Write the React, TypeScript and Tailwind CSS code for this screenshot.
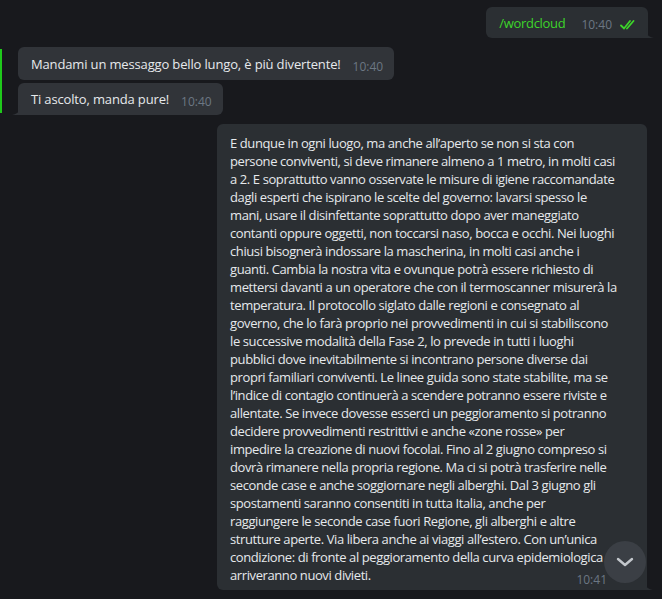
import React from 'react';

const LINES = [
  'E dunque in ogni luogo, ma anche all’aperto se non si sta con',
  'persone conviventi, si deve rimanere almeno a 1 metro, in molti casi',
  'a 2. E soprattutto vanno osservate le misure di igiene raccomandate',
  'dagli esperti che ispirano le scelte del governo: lavarsi spesso le',
  'mani, usare il disinfettante soprattutto dopo aver maneggiato',
  'contanti oppure oggetti, non toccarsi naso, bocca e occhi. Nei luoghi',
  'chiusi bisognerà indossare la mascherina, in molti casi anche i',
  'guanti. Cambia la nostra vita e ovunque potrà essere richiesto di',
  'mettersi davanti a un operatore che con il termoscanner misurerà la',
  'temperatura. Il protocollo siglato dalle regioni e consegnato al',
  'governo, che lo farà proprio nei provvedimenti in cui si stabiliscono',
  'le successive modalità della Fase 2, lo prevede in tutti i luoghi',
  'pubblici dove inevitabilmente si incontrano persone diverse dai',
  'propri familiari conviventi. Le linee guida sono state stabilite, ma se',
  'l’indice di contagio continuerà a scendere potranno essere riviste e',
  'allentate. Se invece dovesse esserci un peggioramento si potranno',
  'decidere provvedimenti restrittivi e anche «zone rosse» per',
  'impedire la creazione di nuovi focolai. Fino al 2 giugno compreso si',
  'dovrà rimanere nella propria regione. Ma ci si potrà trasferire nelle',
  'seconde case e anche soggiornare negli alberghi. Dal 3 giugno gli',
  'spostamenti saranno consentiti in tutta Italia, anche per',
  'raggiungere le seconde case fuori Regione, gli alberghi e altre',
  'strutture aperte. Via libera anche ai viaggi all’estero. Con un’unica',
  'condizione: di fronte al peggioramento della curva epidemiologica',
];

const font = { fontFamily: '"Open Sans", "Noto Sans", sans-serif' };

const Checks = () => (
  <svg width="18" height="10" viewBox="0 0 18 10" fill="none" stroke="#3dd62a" strokeWidth="1.8" strokeLinecap="round">
    <path d="M1 5.5l3 3 6-7.5" />
    <path d="M7 8.5l6.5-7.5" />
  </svg>
);

const TailRight = () => (
  <svg className="absolute -right-[6px] bottom-0" width="8" height="10" viewBox="0 0 8 10">
    <path d="M0 0 C0 6 2 9 8 10 L0 10 Z" fill="#2b2f33" />
  </svg>
);

const TailLeft = () => (
  <svg className="absolute -left-[6px] bottom-0" width="8" height="10" viewBox="0 0 8 10">
    <path d="M8 0 C8 6 6 9 0 10 L8 10 Z" fill="#313439" />
  </svg>
);

export default function App() {
  return (
    <div className="relative w-[662px] h-[599px] overflow-hidden bg-[#18191d] text-[13px] leading-[18px] text-[#e6e9ec]" style={font}>
      <div className="flex flex-col pt-[7px]">
        {/* outgoing command */}
        <div className="flex justify-end pr-[14px]">
          <div className="relative flex items-end gap-[16px] rounded-[6px] rounded-br-none bg-[#2b2f33] pl-[13px] pr-[10px] pt-[7px] pb-[6px]">
            <span className="text-[#3dd62a] tracking-[-0.3px]">/wordcloud</span>
            <span className="flex items-center gap-[8px] text-[12px] leading-[16px] text-[#6c7783] translate-y-[1px]">
              10:40
              <Checks />
            </span>
            <TailRight />
          </div>
        </div>

        {/* incoming group */}
        <div className="mt-[9px] flex">
          <div className="w-[2px] bg-[#1fc81b] my-[2px]" />
          <div className="flex flex-col items-start gap-[3px] pl-[16px]">
            <div className="flex items-end gap-[12px] rounded-[6px] bg-[#313439] pl-[13px] pr-[11px] pt-[8px] pb-[7px]">
              <span className="tracking-[-0.15px]">Mandami un messaggo bello lungo, è più divertente!</span>
              <span className="text-[12px] leading-[16px] text-[#6c7783] translate-y-[2px]">10:40</span>
            </div>
            <div className="relative flex items-end gap-[12px] rounded-[6px] rounded-bl-none bg-[#313439] pl-[13px] pr-[11px] pt-[7px] pb-[7px]">
              <span className="tracking-[-0.15px]">Ti ascolto, manda pure!</span>
              <span className="text-[12px] leading-[16px] text-[#6c7783] translate-y-[2px]">10:40</span>
              <TailLeft />
            </div>
          </div>
        </div>

        {/* long outgoing message */}
        <div className="mt-[9px] flex justify-end pr-[15px]">
          <div className="relative w-[430px] rounded-[6px] rounded-br-none bg-[#2b2f33] pl-[13px] pr-[10px] pt-[10px] pb-[6px] tracking-[-0.4px]">
            {LINES.map((l, i) => (
              <div key={i} className="whitespace-nowrap">{l}</div>
            ))}
            <div className="flex items-end justify-between">
              <span>arriveranno nuovi divieti.</span>
              <span className="text-[12px] leading-[16px] tracking-normal text-[#6c7783] translate-y-[4px] mr-[30px]">10:41</span>
            </div>
            <TailRight />
          </div>
        </div>
      </div>

      {/* scroll to bottom */}
      <div className="absolute left-[604px] top-[541px] flex h-[42px] w-[42px] items-center justify-center rounded-full bg-[#3b3f45]">
        <svg width="18" height="10" viewBox="0 0 18 10" fill="none" stroke="#c3c7cc" strokeWidth="2.4" strokeLinecap="round" strokeLinejoin="round">
          <path d="M2 2l7 6 7-6" />
        </svg>
      </div>
    </div>
  );
}
